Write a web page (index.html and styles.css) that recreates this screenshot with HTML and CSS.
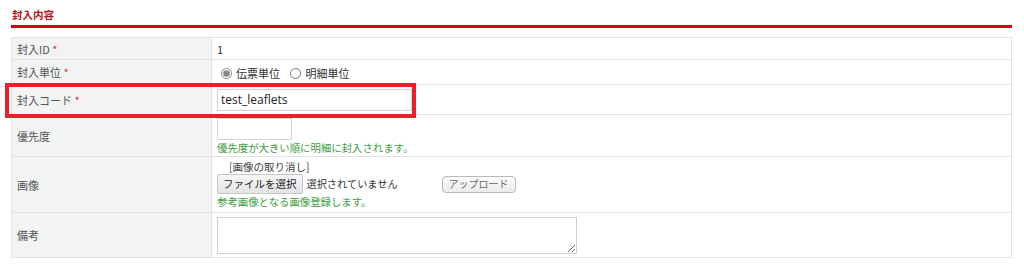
FILE: index.html
```html
<!DOCTYPE html>
<html>
<head>
<meta charset="UTF-8">
<title>封入内容</title>
<link rel="stylesheet" href="styles.css">
</head>
<body>

<div class="wrap">
	<h2 class="ttl">封入内容</h2>

	<div class="frm">
		<table class="tbl">
			<colgroup>
				<col class="c-label">
				<col>
			</colgroup>
			<tr class="r1">
				<th>封入ID <span class="req">*</span></th>
				<td>1</td>
			</tr>
			<tr class="r2">
				<th>封入単位 <span class="req">*</span></th>
				<td>
					<label class="rd"><input type="radio" name="unit" checked> 伝票単位</label>
					<label class="rd"><input type="radio" name="unit"> 明細単位</label>
				</td>
			</tr>
			<tr class="r3">
				<th>封入コード <span class="req">*</span></th>
				<td><input type="text" class="txt txt-code" value="test_leaflets"></td>
			</tr>
			<tr class="r4">
				<th>優先度</th>
				<td class="top">
					<input type="text" class="txt txt-pri"><br>
					<span class="hint">優先度が大きい順に明細に封入されます。</span>
				</td>
			</tr>
			<tr class="r5">
				<th>画像</th>
				<td class="top">
					<div class="cancel">[画像の取り消し]</div>
					<div class="file-line">
						<span class="file-btn">ファイルを選択</span>
						<span class="file-name">選択されていません</span>
						<button type="button" class="up">アップロード</button>
					</div>
					<span class="hint">参考画像となる画像登録します。</span>
				</td>
			</tr>
			<tr class="r6">
				<th>備考</th>
				<td><textarea class="memo"></textarea></td>
			</tr>
		</table>

		<!-- 強調枠 -->
		<div class="mark"></div>
	</div>
</div>

</body>
</html>
```

FILE: styles.css
```css
body{ margin: 0; background: #fff;}

.wrap
{
	padding: 0 12px 0 11px;
	font-family: "Noto Sans CJK JP", "Noto Sans", sans-serif;
	font-size: 11px;
	color: #444;
}

.ttl
{
	margin: 0;
	padding: 8px 0 4px 1px;
	font-size: 10.5px;
	line-height: 13px;
	font-weight: bold;
	color: #b0141c;
	border-bottom: 3px solid #d8000c;
}

.frm
{
	position: relative;
	margin-top: 9px;
}

.tbl
{
	width: 100%;
	border-collapse: collapse;
	border: 1px solid #e3e3e3;
}

.c-label { width: 200px; }

.tbl th,
.tbl td
{
	border: 1px solid #e3e3e3;
	padding: 0 5px;
	vertical-align: middle;
	text-align: left;
	line-height: 14px;
}

.tbl th
{
	background-color: #f2f3f3;
	font-weight: normal;
	color: #555;
}

.tbl td { color: #333; }

.tbl td.top { vertical-align: top; }

.r1 { height: 22px; }
.r2 { height: 25px; }
.r3 { height: 30px; }
.r4 { height: 42px; }
.r5 { height: 56px; }
.r6 { height: 45px; }

.r2 td { padding-top: 3px; }

.req { color: #e0343c; }

.rd
{
	display: inline-flex;
	align-items: center;
	margin-right: 4px;
}
.rd input
{
	margin: 0 4px 0 4px;
	width: 11px;
	height: 11px;
	accent-color: #888;
}

.txt
{
	box-sizing: border-box;
	border: 1px solid #d4d4d4;
	font-family: "Open Sans", "Noto Sans", sans-serif;
	font-size: 12px;
	color: #222;
	padding: 0 3px;
	margin: 0;
}
.txt-code
{
	width: 195px;
	height: 22px;
}
.txt-pri
{
	width: 75px;
	height: 22px;
	margin-top: 3px;
}

.hint
{
	display: inline-block;
	color: #3f9d3f;
	font-size: 10.4px;
	margin-top: 0;
}

.cancel
{
	padding: 3px 0 0 12px;
	color: #444;
	font-size: 10.5px;
}

.file-line
{
	display: flex;
	align-items: center;
	height: 20px;
}

.file-btn
{
	box-sizing: border-box;
	height: 20px;
	padding: 0 5px;
	border: 1px solid #c6c6c6;
	border-radius: 2px;
	background: linear-gradient(#f6f6f6, #e4e4e4);
	font-size: 10.5px;
	line-height: 18px;
	color: #222;
}

.file-name
{
	margin-left: 4px;
	color: #333;
	font-size: 10.2px;
}

.up
{
	margin-left: 44px;
	height: 17px;
	width: 74px;
	padding: 0;
	border: 1px solid #b9b9b9;
	border-radius: 4px;
	background: linear-gradient(#fdfdfd, #ececec);
	font-family: "Noto Sans CJK JP", sans-serif;
	font-size: 10px;
	line-height: 14px;
	color: #666;
}

.memo
{
	box-sizing: border-box;
	display: block;
	width: 360px;
	height: 37px;
	margin: 0;
	border: 1px solid #cfcfcf;
	resize: both;
}

.mark
{
	position: absolute;
	left: -6px;
	top: 46px;
	width: 403px;
	height: 27px;
	border: 4px solid #e8202a;
	pointer-events: none;
}
```
